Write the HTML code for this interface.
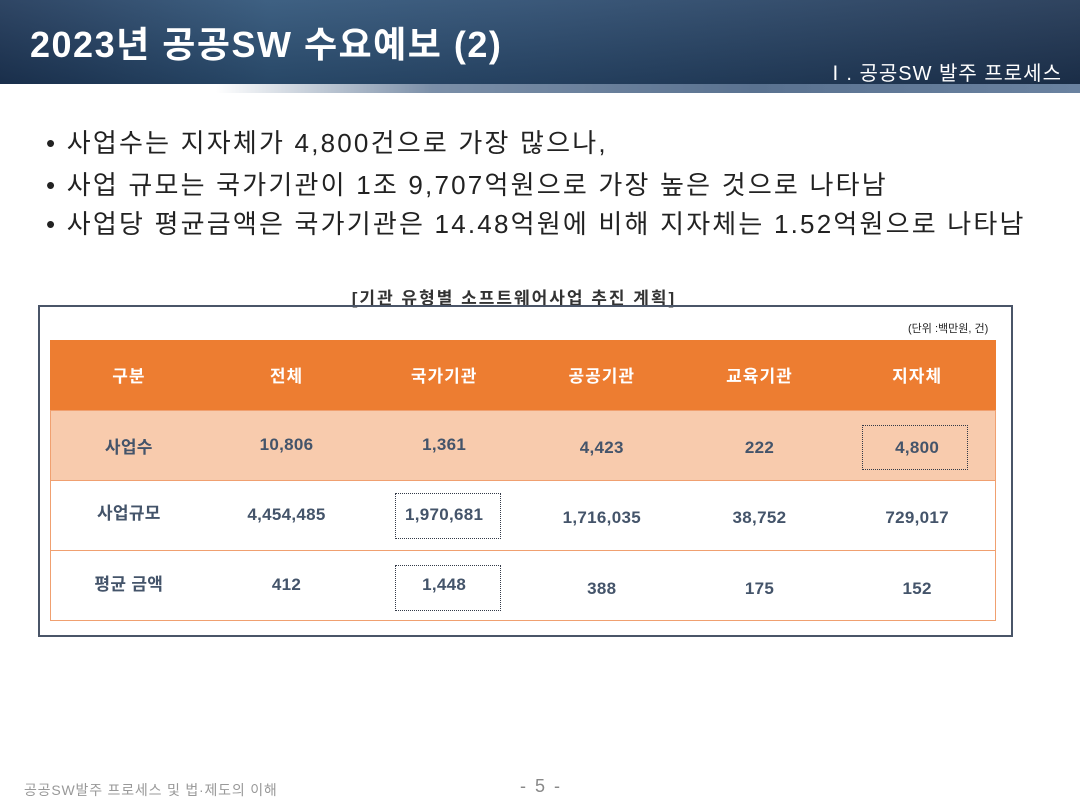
<!DOCTYPE html>
<html><head><meta charset="utf-8"><style>
*{margin:0;padding:0;box-sizing:border-box}
body{width:1080px;height:810px;background:#fff;position:relative;overflow:hidden;font-family:"Liberation Sans","Noto Sans CJK KR",sans-serif}
.hdr{position:absolute;left:0;top:0;width:1080px;height:86px;background:linear-gradient(90deg,#1d3657 0%,#2e5378 25%,#2a4a6e 50%,#243f60 75%,#1e3452 100%)}
.hdr2{position:absolute;left:0;top:0;width:1080px;height:86px;background:linear-gradient(180deg,rgba(255,255,255,0.08),rgba(0,0,0,0.15))}
.band{position:absolute;left:0;top:84px;width:1080px;height:9px;background:linear-gradient(90deg,#fff 0%,#fff 20%,#7b8fa8 40%,#5a7290 70%,#6a82a0 100%)}
.title{position:absolute;left:30px;top:16px;color:#fff;font-size:36px;font-weight:bold;letter-spacing:1.5px}
.sub{position:absolute;right:18px;top:57px;color:#fff;font-size:20px;letter-spacing:1px}
.bul{position:absolute;left:46px;font-size:26px;color:#222;letter-spacing:2.2px;white-space:nowrap}
.cap{position:absolute;left:0;width:1028px;top:284px;text-align:center;font-size:17px;font-weight:bold;color:#333;letter-spacing:2px}
.box{position:absolute;left:38px;top:305px;width:975px;height:332px;border:2px solid #4a5568}
.unit{position:absolute;left:908px;top:320px;font-size:11px;color:#222}
table{position:absolute;left:50px;top:340px;width:946px;border-collapse:collapse;table-layout:fixed}
td{text-align:center;font-weight:bold;font-size:17px;color:#44546a;border-bottom:1px solid #f0a070;letter-spacing:0.3px}
tr.h td{background:#ed7d31;color:#fff;height:70px;font-size:17px;letter-spacing:1px}
tr.r1 td{background:#f8cbad;height:70px}
tr.r2 td,tr.r3 td{height:70px;background:#fff}
.t{position:absolute;border-left:1px solid #f0a070;border-right:1px solid #f0a070;left:50px;top:410px;width:946px;height:210px}
.dot{position:absolute;border:1.5px dotted #333a48}
.foot{position:absolute;left:24px;top:780px;font-size:14px;color:#999;letter-spacing:0.8px}
.pg{position:absolute;left:520px;top:776px;font-size:18px;color:#888;letter-spacing:2px}
</style></head><body>
<div class="hdr"></div><div class="hdr2"></div><div class="band"></div>
<div class="title">2023년 공공SW 수요예보 (2)</div>
<div class="sub">Ⅰ. 공공SW 발주 프로세스</div>
<div class="bul" style="top:123px">• 사업수는 지자체가 4,800건으로 가장 많으나,</div>
<div class="bul" style="top:165px">• 사업 규모는 국가기관이 1조 9,707억원으로 가장 높은 것으로 나타남</div>
<div class="bul" style="top:204px">• 사업당 평균금액은 국가기관은 14.48억원에 비해 지자체는 1.52억원으로 나타남</div>
<div class="cap">[기관 유형별 소프트웨어사업 추진 계획]</div>
<div class="box"></div>
<div class="unit">(단위 :백만원, 건)</div>
<table>
<tr class="h"><td>구분</td><td>전체</td><td>국가기관</td><td>공공기관</td><td>교육기관</td><td>지자체</td></tr>
<tr class="r1"><td>사업수</td><td>10,806</td><td>1,361</td><td style="padding-top:6px">4,423</td><td style="padding-top:6px">222</td><td style="padding-top:6px">4,800</td></tr>
<tr class="r2"><td style="padding-bottom:8px">사업규모</td><td>4,454,485</td><td>1,970,681</td><td style="padding-top:6px">1,716,035</td><td style="padding-top:6px">38,752</td><td style="padding-top:6px">729,017</td></tr>
<tr class="r3"><td style="padding-bottom:6px">평균 금액</td><td>412</td><td>1,448</td><td style="padding-top:8px">388</td><td style="padding-top:8px">175</td><td style="padding-top:8px">152</td></tr>
</table>
<div class="t"></div>
<div class="dot" style="left:862px;top:425px;width:106px;height:45px"></div>
<div class="dot" style="left:395px;top:493px;width:106px;height:46px"></div>
<div class="dot" style="left:395px;top:565px;width:106px;height:46px"></div>
<div class="foot">공공SW발주 프로세스 및 법·제도의 이해</div>
<div class="pg">- 5 -</div>
</body></html>
